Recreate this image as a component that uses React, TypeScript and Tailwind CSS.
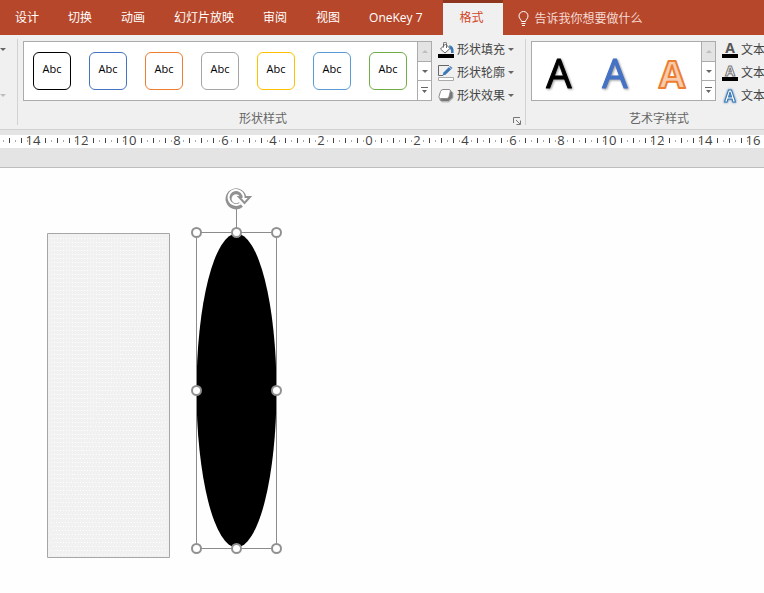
import type { ReactNode } from "react";

const tabs = ["设计", "切换", "动画", "幻灯片放映", "审阅", "视图", "OneKey 7"];

const shapeStyles = [
  { id: "black", border: "border-black" },
  { id: "blue", border: "border-[#4472c4]" },
  { id: "orange", border: "border-[#ed7d31]" },
  { id: "gray", border: "border-[#a5a5a5]" },
  { id: "gold", border: "border-[#ffc000]" },
  { id: "sky", border: "border-[#5b9bd5]" },
  { id: "green", border: "border-[#70ad47]" },
];

const wordArtStyles = [
  { id: "black", look: "text-[40px] fill-black stroke-black stroke-1 drop-shadow-[1px_1px_1px_#00000066]" },
  { id: "blue", look: "text-[40px] fill-[#4472c4] stroke-[#4472c4] stroke-1 drop-shadow-[1px_1px_1px_#00000066]" },
  { id: "orange", look: "text-[38px] fill-[#f8cbad] stroke-[#ed7d31] stroke-2 font-bold" },
];

const rulerLabels = [14, 12, 10, 8, 6, 4, 2, 0, 2, 4, 6, 8, 10, 12, 14, 16];

function DownArrow({ faded = false }: { faded?: boolean }) {
  return (
    <svg width="6" height="3" viewBox="0 0 6 3" className={faded ? "fill-[#bdbdbd]" : "fill-[#666]"}>
      <path d="M0 0h6L3 3z" />
    </svg>
  );
}

function GalleryScroll() {
  return (
    <div className="flex w-[14px] shrink-0 flex-col border-l border-[#ababab]">
      <button aria-label="向上" className="flex flex-1 items-center justify-center bg-[#e3e3e3]">
        <svg width="6" height="3" viewBox="0 0 6 3" fill="#bdbdbd">
          <path d="M0 3h6L3 0z" />
        </svg>
      </button>
      <button aria-label="向下" className="flex flex-1 items-center justify-center border-t border-[#ababab]">
        <DownArrow />
      </button>
      <button aria-label="其他" className="flex flex-1 items-center justify-center border-t border-[#ababab]">
        <svg width="7" height="7" viewBox="0 0 7 7" fill="#666">
          <path d="M0 0h7v1H0zM1 3h5L3.500 6z" />
        </svg>
      </button>
    </div>
  );
}

function MenuButton({ icon, label, arrow = true }: { icon: ReactNode; label: string; arrow?: boolean }) {
  return (
    <button className="flex h-[23px] items-center gap-[3px] whitespace-nowrap text-[#444]">
      {icon}
      <span>{label}</span>
      {arrow && <DownArrow />}
    </button>
  );
}

function FillIcon() {
  return (
    <svg width="16" height="16" viewBox="0 0 16 16">
      <path d="M2.500 7 7.500 2 12 6.500 7 11z" fill="#fff" stroke="#666" />
      <path d="M5.500 5.500v-4a1 1 0 0 1 3 0V6" fill="none" stroke="#666" />
      <path d="M11 3.500c3.500 0 5 2.500 4.500 7.500h-2.500c.3-2.500 0-3.500-1-4z" fill="#3b78b5" />
      <path d="M0 12h16v4H0z" />
    </svg>
  );
}

function OutlineIcon() {
  return (
    <svg width="16" height="16" viewBox="0 0 16 16">
      <path d="M11 .5H.5v10H5" fill="none" stroke="#666" />
      <path d="M4.500 10.500l1-3L12 1l2.500 2L7.500 9.800z" fill="#3b78b5" />
      <path d="M11 2l2.500 2" stroke="#fff" strokeWidth=".7" />
      <path d="M.5 12.500h15v3H.5z" fill="#fff" stroke="#aaa" />
    </svg>
  );
}

function EffectIcon() {
  return (
    <svg width="16" height="16" viewBox="0 0 16 16">
      <path d="M5 3h8L15.500 5v5L11 14.500H4L1 11.500z" fill="#bbb" />
      <path d="M12 2 14.500 4.500v5L10.500 13H3L1.500 11.500l8-1z" fill="#777" />
      <path d="M5 1.500h6q2 0 1.300 2L11 8.500q-.6 2-2 2H2.500Q.3 10.500 1 8.500L2.500 3.500q.7-2 2.500-2z" fill="#fff" stroke="#8a8a8a" />
    </svg>
  );
}

function LetterIcon({ look, bar = false }: { look: string; bar?: boolean }) {
  return (
    <span className={`flex h-4 w-4 flex-col items-center justify-end ${bar ? "border-b-4 border-black" : ""}`}>
      <span className={`font-[Open_Sans,sans-serif] ${look}`}>A</span>
    </span>
  );
}

function Separator() {
  return <div className="my-1 w-px shrink-0 bg-[#d2d2d2]" />;
}

function Ruler() {
  return (
    <div className="flex h-[13px] bg-white">
      {/* tail of the 16 mark that has scrolled off the left side */}
      <svg width="9" height="13" className="shrink-0">
        <path d="M3 5h1v2H3z" fill="#aaa" />
      </svg>
      {rulerLabels.map((label, i) => (
        <div
          key={i}
          className="grid h-[13px] w-12 shrink-0 items-start justify-items-center text-[13px] leading-[11px] text-[#444]"
        >
          <svg width="48" height="13" className="col-start-1 row-start-1">
            <path d="M0 3h1v5H0zM12 3h1v5h-1zM36 3h1v5h-1z" fill="#444" />
            <path d="M6 5h1v2H6zM18 5h1v2h-1zM30 5h1v2h-1zM42 5h1v2h-1z" fill="#aaa" />
          </svg>
          <span className="col-start-1 row-start-1">{label}</span>
        </div>
      ))}
    </div>
  );
}

const handles = [
  [6, 51],
  [46, 51],
  [86, 51],
  [6, 209],
  [86, 209],
  [6, 367],
  [46, 367],
  [86, 367],
];

function SelectedEllipse() {
  return (
    <svg width="94" height="374" className="absolute top-[13px] left-[190px]">
      <ellipse cx="46.500" cy="209.500" rx="40" ry="157" />
      <path d="M6.500 51.500h80v316h-80zM46.500 27v24" fill="none" stroke="#8c8c8c" />
      {handles.map(([x, y]) => (
        <circle key={`${x}-${y}`} cx={x + 0.5} cy={y + 0.5} r="4.500" fill="#fff" stroke="#919191" strokeWidth="2" />
      ))}
      <path d="M51 23.500a7.500 7.500 0 1 1 2.500-6.500" fill="none" stroke="#919191" strokeWidth="6" />
      <path d="M49 16h11l-5.500 6z" fill="#fff" stroke="#919191" strokeWidth="2" />
      <path d="M50.500 22.500a7.500 7.500 0 1 1 3-5" fill="none" stroke="#fff" strokeWidth="2" />
    </svg>
  );
}

function DottedRectangle() {
  return (
    <svg width="123" height="325" className="absolute top-[65px] left-[47px]">
      <defs>
        <pattern id="dots" x="4" y="4" width="3" height="4" patternUnits="userSpaceOnUse">
          <path d="M0 1h1v1H0z" fill="#fff" />
        </pattern>
        <pattern id="staggered" x="4" y="4" width="6" height="8" patternUnits="userSpaceOnUse">
          <path d="M0 1h1v1H0zM3 1h1v1H3zM2 5h1v1H2zM5 5h1v1H5z" fill="#fff" />
        </pattern>
      </defs>
      <path d="M.5.5h122v324H.5z" fill="#f1f1f1" />
      <path d="M4 4h115v8L4 296z" fill="url(#dots)" />
      <path d="M119 12v310H4v-26z" fill="url(#staggered)" />
      <path d="M.5.5h122v324H.5z" fill="none" stroke="#a6a6a6" />
    </svg>
  );
}

export default function App() {
  return (
    <div className="flex min-h-screen flex-col overflow-hidden bg-[#fefefe] font-[Open_Sans,Noto_Sans_CJK_SC,sans-serif] text-xs">
      <nav className="flex h-[35px] items-stretch bg-[#b7472a] whitespace-nowrap text-white">
        <div className="flex gap-[29px] pr-5 pl-[15px]">
          {tabs.map((tab) => (
            <button key={tab}>{tab}</button>
          ))}
        </div>
        <button className="w-[60px] border-t-[3px] border-[#8e3620] bg-[#f0f0f0] pr-[2px] pb-[3px] text-[#d24726]">
          格式
        </button>
        <button className="flex items-center gap-[6px] pt-[2px] pl-[15px] text-[#f4dad4]">
          <svg width="11" height="15" viewBox="0 0 11 15" fill="none" stroke="#fff">
            <path d="M3.500 10.500C3.500 8.500 1 8 1 5a4.500 4.500 0 0 1 9 0c0 3-2.500 3.500-2.500 5.500zM3.500 12.500h4M4 14.500h3" />
          </svg>
          告诉我你想要做什么
        </button>
      </nav>

      <section className="flex h-[95px] overflow-hidden border-b border-[#d2d2d2] bg-[#f0f0f0]">
        <div className="flex w-[17px] shrink-0 flex-col gap-[43px] pt-[13px]">
          <DownArrow />
          <DownArrow faded />
        </div>
        <Separator />

        <div className="flex w-[507px] shrink-0 flex-col pt-[3px] pl-[5px]">
          <div className="flex gap-[6px]">
            <div className="mt-[3px] flex h-[60px] border border-[#ababab] bg-white">
              <div className="flex items-center gap-[18px] pr-[10px] pl-[9px]">
                {shapeStyles.map(({ id, border }) => (
                  <button key={id} className={`h-[38px] w-[38px] rounded-md border pb-[3px] text-[11px] text-black ${border}`}>
                    Abc
                  </button>
                ))}
              </div>
              <GalleryScroll />
            </div>
            <div className="flex flex-col">
              <MenuButton icon={<FillIcon />} label="形状填充" />
              <MenuButton icon={<OutlineIcon />} label="形状轮廓" />
              <MenuButton icon={<EffectIcon />} label="形状效果" />
            </div>
          </div>
          <div className="flex flex-1 items-center pt-[2px] pr-1 text-[#666]">
            <span className="flex-1 pr-[10px] text-center">形状样式</span>
            <button aria-label="形状样式设置" className="pt-[4px]">
              <svg width="8" height="8" viewBox="0 0 8 8" fill="none" stroke="#777">
                <path d="M.5 6V.5H7M3 3l4 4M7.500 3.500v4h-4" />
              </svg>
            </button>
          </div>
        </div>
        <Separator />

        <div className="flex flex-1 flex-col pt-[3px] pl-[5px]">
          <div className="flex gap-[6px]">
            <div className="mt-[3px] flex h-[60px] w-[185px] shrink-0 border border-[#ababab] bg-white">
              <div className="flex flex-1 items-center justify-around">
                {wordArtStyles.map(({ id, look }) => (
                  <button key={id} aria-label={id}>
                    <svg width="36" height="48" className="overflow-visible">
                      <text x="17" y="41" textAnchor="middle" strokeLinejoin="round" className={look}>
                        A
                      </text>
                    </svg>
                  </button>
                ))}
              </div>
              <GalleryScroll />
            </div>
            <div className="flex flex-col">
              <MenuButton
                icon={<LetterIcon bar look="text-sm leading-3 font-bold text-[#555]" />}
                label="文本"
                arrow={false}
              />
              <MenuButton
                icon={<LetterIcon bar look="text-sm leading-3 font-bold text-white [-webkit-text-stroke:1px_#777]" />}
                label="文本"
                arrow={false}
              />
              <MenuButton
                icon={
                  <LetterIcon look="text-base leading-4 font-bold text-white [-webkit-text-stroke:1px_#3b78b5] drop-shadow-[0_0_1px_#3b78b5]" />
                }
                label="文本"
                arrow={false}
              />
            </div>
          </div>
          <div className="flex flex-1 items-center justify-center pt-[2px] pl-[22px] text-[#666]">艺术字样式</div>
        </div>
      </section>

      <div className="overflow-hidden border-b border-[#bdbdbd] bg-[#e4e4e4] pt-[5px] pb-[19px]">
        <Ruler />
      </div>

      <main className="relative flex-1">
        <DottedRectangle />
        <SelectedEllipse />
      </main>
    </div>
  );
}
